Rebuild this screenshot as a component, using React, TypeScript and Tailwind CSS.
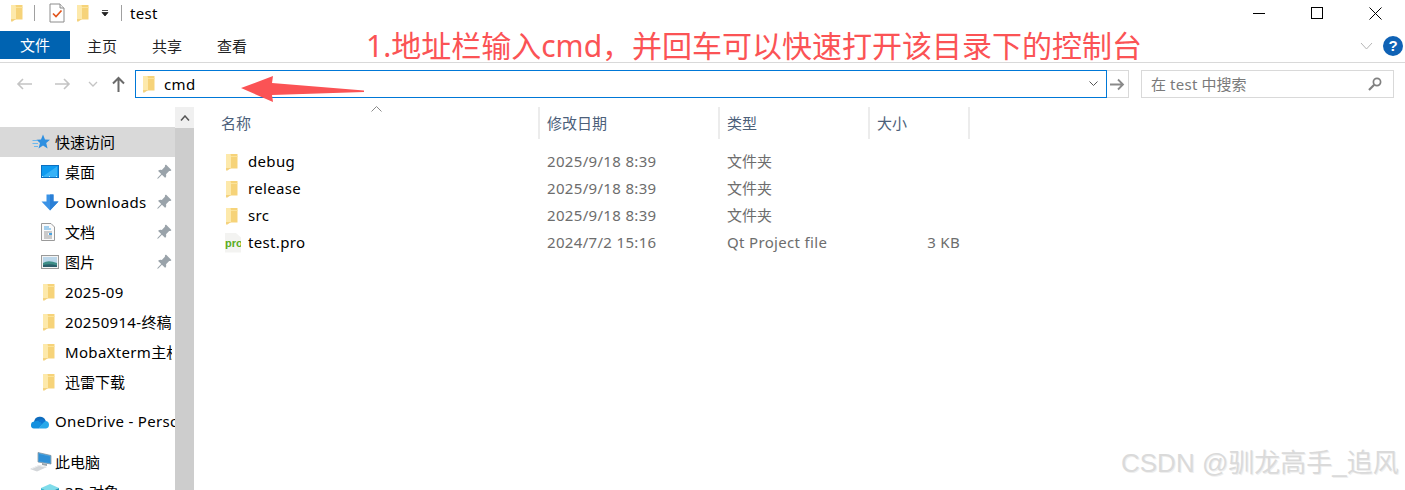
import { BsPinAngleFill } from "react-icons/bs";

const FONT = "[font-family:'Noto_Sans','Noto_Sans_CJK_SC',sans-serif]";

// latin glyphs run a little wider in the reference than the CJK ones
function L({ children }: { children: React.ReactNode }) {
  return <span className="tracking-[0.33px]">{children}</span>;
}

function Folder({ className = "" }: { className?: string }) {
  return (
    <svg className={className} width="13" height="18" viewBox="0 0 13 18">
      <path d="M1 1 H12.5 V15.5 H1 Z" fill="#f6d379" />
      <path d="M1 1 H5.5 L6 3 V15.5 H1 Z" fill="#fde9ab" />
      <path d="M1 15 H6 L2.5 17.5 H1 Z" fill="#f4d27e" />
      <path d="M6 3 H12.5 V4 H6 Z" fill="#fbe39a" />
    </svg>
  );
}

function CheckDoc() {
  return (
    <svg width="16" height="20" viewBox="0 0 16 20">
      <path d="M1 1 H11 L15 5 V19 H1 Z" fill="#fff" stroke="#8c8c8c" />
      <path d="M11 1 V5 H15" fill="#eee" stroke="#8c8c8c" />
      <path d="M4 10.5 L7 13.5 L12.5 7.5" fill="none" stroke="#e2561d" strokeWidth="1.7" />
    </svg>
  );
}

function Star() {
  return (
    <svg width="18" height="16" viewBox="0 0 18 16">
      <path d="M11 0.5 L13 5.5 L18 5.7 L14.2 9 L15.6 14.5 L11 11.5 L6.5 14.5 L8 9 L4.5 5.7 L9 5.5 Z" fill="#2e8fe0" />
      <path d="M0.5 6.5 H5 M0.5 9.5 H6 M2 12.5 H6" stroke="#6cb8ee" strokeWidth="1" />
    </svg>
  );
}

function Desktop() {
  return (
    <svg width="18" height="14" viewBox="0 0 18 14">
      <rect x="0.5" y="0.5" width="17" height="12" fill="#0f9bf0" stroke="#0c6fc0" />
      <path d="M1 12 L16 1.5 V12 Z" fill="#37b2f7" />
      <path d="M1 11.5 H17" stroke="#bfe6fb" strokeDasharray="1 6" />
    </svg>
  );
}

function DownArrow() {
  return (
    <svg width="18" height="17" viewBox="0 0 18 17">
      <path d="M5.5 0.5 H12.5 V7.5 H17.5 L9 16.5 L0.5 7.5 H5.5 Z" fill="#3b93e6" />
      <path d="M9 0.5 H12.5 V7.5 H17.5 L9 16.5 Z" fill="#2a7fd6" />
    </svg>
  );
}

function DocIcon() {
  return (
    <svg width="14" height="18" viewBox="0 0 14 18">
      <path d="M0.5 0.5 H10 L13.5 4 V17.5 H0.5 Z" fill="#fafafa" stroke="#9a9a9a" />
      <path d="M3 4 H8 M3 6 H10" stroke="#4aa3e0" />
      <path d="M3 9 H11 M3 11 H7 M3 13 H11 M3 15 H11" stroke="#9a9a9a" />
      <rect x="8" y="10" width="3" height="2" fill="#4aa3e0" />
    </svg>
  );
}

function PictureIcon() {
  return (
    <svg width="18" height="14" viewBox="0 0 18 14">
      <rect x="0.5" y="0.5" width="17" height="13" fill="#f4f4f4" stroke="#9a9a9a" />
      <rect x="2" y="2" width="14" height="10" fill="#bcd7ea" />
      <path d="M2 8 Q7 4.5 16 8 V12 H2 Z" fill="#3f8f88" />
      <path d="M2 10 Q9 8.5 16 10.5 V12 H2 Z" fill="#2c5f6b" />
    </svg>
  );
}

function OneDrive() {
  return (
    <svg width="20" height="14" viewBox="0 0 20 14">
      <path d="M4 7 A6 6 0 0 1 15.5 5.5 L16 7 H8 Z" fill="#0f6cbd" />
      <path d="M4 13.5 A3.3 3.3 0 0 1 1 10 A3.5 3.5 0 0 1 4 6.5 L8 5.5 L13 9 L9 13.5 Z" fill="#1490df" />
      <path d="M8 5.5 A6 6 0 0 1 15.5 6 L13 10 Z" fill="#0f78d4" />
      <path d="M9 13.5 L13 8 L15.5 6 A3.8 3.8 0 0 1 16 13.5 Z" fill="#28a8ea" />
    </svg>
  );
}

function Computer() {
  return (
    <svg width="22" height="20" viewBox="0 0 22 20">
      <path d="M8 0.5 L21 3.5 V12 L8 10 Z" fill="#4aa6e2" stroke="#7c8a96" strokeWidth="0.7" />
      <path d="M9 2 L20 4.5 V11 L9 9.3 Z" fill="#2f8fd6" />
      <path d="M12 11 L17 12 V14 L12 13 Z" fill="#9aa5ad" />
      <path d="M0 17 L9 13 L17 15 L7 19.5 Z" fill="#d3d6d9" />
      <path d="M2 16.5 L9 13.5 L15 15" fill="none" stroke="#eef0f2" />
    </svg>
  );
}

function Cube() {
  return (
    <svg width="18" height="16" viewBox="0 0 18 16">
      <path d="M9 0 L18 4 L9 8 L0 4 Z" fill="#7fdcea" />
      <path d="M0 4 L9 8 V16 L0 12 Z" fill="#35b6d0" />
      <path d="M18 4 L9 8 V16 L18 12 Z" fill="#1d97b8" />
    </svg>
  );
}

function ProIcon() {
  return (
    <div className="relative w-[16px] h-[20px] bg-[#f3f3f1] [clip-path:polygon(0_0,65%_0,100%_25%,100%_100%,0_100%)]">
      <span className="absolute left-0 top-[5px] text-[11px] leading-[10px] font-bold text-[#59ad1c] [font-family:'Liberation_Sans',sans-serif]">
        pro
      </span>
    </div>
  );
}

function Arrow({ d, stroke = "#c4c4c4" }: { d: string; stroke?: string }) {
  return (
    <svg width="16" height="14" viewBox="0 0 16 14">
      <path d={d} fill="none" stroke={stroke} strokeWidth="1.6" />
    </svg>
  );
}

function NavRow({
  icon,
  label,
  pinned,
}: {
  icon: React.ReactNode;
  label: React.ReactNode;
  pinned?: boolean;
}) {
  return (
    <div className="h-[30px] flex items-center shrink-0 pl-[41px] pr-[3px]">
      <div className="w-[24px] flex items-center">{icon}</div>
      <span className="flex-1 whitespace-nowrap overflow-hidden text-black">{label}</span>
      {pinned && <BsPinAngleFill className="text-[#9aa3aa] w-[16px] h-[16px]" />}
    </div>
  );
}

const FILES = [
  { name: "debug", date: "2025/9/18 8:39", type: "文件夹", size: "" },
  { name: "release", date: "2025/9/18 8:39", type: "文件夹", size: "" },
  { name: "src", date: "2025/9/18 8:39", type: "文件夹", size: "" },
  { name: "test.pro", date: "2024/7/2 15:16", type: "Qt Project file", size: "3 KB" },
];

export default function App() {
  return (
    <div className={"relative w-[1405px] h-[490px] overflow-hidden bg-white flex flex-col text-[15px] " + FONT}>
      {/* title bar */}
      <div className="h-[31px] shrink-0 flex items-center pb-[5px]">
        <div className="ml-[10px] flex"><Folder /></div>
        <div className="ml-[11px] w-px h-[16px] bg-[#a0a0a0]" />
        <div className="ml-[14px] flex"><CheckDoc /></div>
        <div className="ml-[11px] flex"><Folder /></div>
        <svg className="ml-[12px]" width="8" height="8" viewBox="0 0 8 8">
          <path d="M1 1.5 H7 M1 3.5 H7 L4 7 Z" stroke="#222" fill="#222" strokeWidth="0.8" />
        </svg>
        <div className="ml-[12px] w-px h-[16px] bg-[#a0a0a0]" />
        <span className="ml-[8px] text-black"><L>test</L></span>
        <div className="ml-auto flex items-center">
          <div className="w-[58px] h-[24px] flex items-center justify-center">
            <div className="w-[12px] h-px bg-black" />
          </div>
          <div className="w-[58px] h-[24px] flex items-center justify-center">
            <div className="w-[12px] h-[12px] border border-black" />
          </div>
          <div className="w-[59px] h-[24px] flex items-center justify-center">
            <svg width="13" height="13" viewBox="0 0 13 13">
              <path d="M0.5 0.5 L12.5 12.5 M12.5 0.5 L0.5 12.5" stroke="#000" />
            </svg>
          </div>
        </div>
      </div>

      {/* ribbon tabs */}
      <div className="h-[32px] shrink-0 flex items-start border-b border-[#d9d9d9]">
        <div className="w-[70px] h-[28px] bg-[#0063b1] text-white flex items-center justify-center">文件</div>
        <div className="flex ml-[17px] gap-[35px] h-[30px] items-center text-[#222]">
          <span>主页</span>
          <span>共享</span>
          <span>查看</span>
        </div>
        <div className="ml-auto flex items-center h-[30px] pr-[2px]">
          <svg width="13" height="8" viewBox="0 0 13 8">
            <path d="M1 1 L6.5 7 L12 1" fill="none" stroke="#b5b5b5" />
          </svg>
          <div className="ml-[10px] w-[20px] h-[20px] rounded-full bg-[#0f62b5] text-white text-[15px] font-bold flex items-center justify-center [font-family:'Liberation_Sans',sans-serif]">
            ?
          </div>
        </div>
      </div>

      {/* address row */}
      <div className="h-[44px] shrink-0 flex items-center pb-[2px]">
        <div className="w-[135px] flex items-center shrink-0 pl-[16px]">
          <Arrow d="M16 7 H2 M7 2 L2 7 L7 12" />
          <div className="ml-[23px] flex"><Arrow d="M0 7 H14 M9 2 L14 7 L9 12" /></div>
          <svg className="ml-[17px]" width="10" height="6" viewBox="0 0 10 6">
            <path d="M1 1 L5 5 L9 1" fill="none" stroke="#c4c4c4" strokeWidth="1.3" />
          </svg>
          <svg className="ml-[14px]" width="13" height="16" viewBox="0 0 13 16">
            <path d="M6.5 16 V2 M1 7.5 L6.5 2 L12 7.5" fill="none" stroke="#6a6a6a" strokeWidth="2" />
          </svg>
        </div>
        <div className="w-[972px] h-[28px] border border-[#0078d7] flex items-center pl-[6px] pr-[8px] shrink-0">
          <Folder />
          <span className="ml-[9px] text-black"><L>cmd</L></span>
          <svg className="ml-auto" width="9" height="6" viewBox="0 0 9 6">
            <path d="M0.5 0.5 L4.5 4.5 L8.5 0.5" fill="none" stroke="#555" />
          </svg>
        </div>
        <div className="w-[22px] h-[28px] border border-l-0 border-[#d9d9d9] flex items-center justify-center shrink-0">
          <svg width="15" height="13" viewBox="0 0 15 13">
            <path d="M0 6.5 H13 M8 1.5 L13 6.5 L8 11.5" fill="none" stroke="#8a8a8a" strokeWidth="1.8" />
          </svg>
        </div>
        <div className="ml-[12px] w-[253px] h-[28px] border border-[#d9d9d9] flex items-center pl-[9px] pr-[11px] text-[#7a7a7a] shrink-0">
          <span>在 <L>test</L> 中搜索</span>
          <svg className="ml-auto" width="14" height="14" viewBox="0 0 14 14">
            <circle cx="9" cy="5" r="3.6" fill="none" stroke="#808080" strokeWidth="1.7" />
            <path d="M6.2 7.8 L1 13" stroke="#808080" strokeWidth="2.2" />
          </svg>
        </div>
      </div>

      {/* body */}
      <div className="flex-1 min-h-0 flex">
        <div className="w-[175px] shrink-0 overflow-hidden pt-[20px] flex flex-col">
          <div className="h-[30px] bg-[#d9d9d9] flex items-center pl-[32px] shrink-0">
            <div className="w-[23px] flex"><Star /></div>
            <span className="text-black">快速访问</span>
          </div>
          <NavRow icon={<Desktop />} label="桌面" pinned />
          <NavRow icon={<DownArrow />} label={<L>Downloads</L>} pinned />
          <NavRow icon={<DocIcon />} label="文档" pinned />
          <NavRow icon={<PictureIcon />} label="图片" pinned />
          <NavRow icon={<Folder className="ml-[1px]" />} label={<L>2025-09</L>} />
          <NavRow icon={<Folder className="ml-[1px]" />} label={<><L>20250914-</L>终稿</>} />
          <NavRow icon={<Folder className="ml-[1px]" />} label={<><L>MobaXterm</L>主机</>} />
          <NavRow icon={<Folder className="ml-[1px]" />} label="迅雷下载" />
          <div className="h-[25px] shrink-0 mt-[12px] flex items-center pl-[30px]">
            <div className="w-[25px] flex shrink-0"><OneDrive /></div>
            <span className="whitespace-nowrap text-black"><L>OneDrive - Personal</L></span>
          </div>
          <div className="h-[30px] shrink-0 mt-[13px] flex items-center pl-[30px]">
            <div className="w-[25px] flex"><Computer /></div>
            <span className="text-black">此电脑</span>
          </div>
          <NavRow icon={<Cube />} label={<><L>3D</L> 对象</>} />
        </div>

        {/* scrollbar */}
        <div className="w-[19px] shrink-0 flex flex-col">
          <div className="h-[21px] bg-[#f0f0f0] flex items-center justify-center">
            <svg width="10" height="6" viewBox="0 0 10 6">
              <path d="M1 5.5 L5 1 L9 5.5" fill="none" stroke="#555" strokeWidth="1.5" />
            </svg>
          </div>
          <div className="flex-1 bg-[#cdcdcd]" />
        </div>

        {/* file list */}
        <div className="flex-1 min-w-0 pl-[27px]">
          <div className="h-[32px] flex text-[#4c607a] relative">
            <div className="w-[319px] border-r-2 border-[#ececec] flex items-center">名称</div>
            <div className="w-[180px] border-r-2 border-[#ececec] flex items-center pl-[7px]">修改日期</div>
            <div className="w-[150px] border-r-2 border-[#ececec] flex items-center pl-[7px]">类型</div>
            <div className="w-[100px] border-r-2 border-[#ececec] flex items-center pl-[7px]">大小</div>
            <svg className="absolute left-[150px] top-[-1px]" width="11" height="6" viewBox="0 0 11 6">
              <path d="M0.5 5.5 L5.5 0.5 L10.5 5.5" fill="none" stroke="#8a8a8a" />
            </svg>
          </div>
          <div className="pt-[9px]">
            {FILES.map((f) => (
              <div key={f.name} className="h-[27px] flex items-center text-[#6d6d6d]">
                <div className="w-[320px] flex items-center text-black shrink-0">
                  <div className="w-[27px] flex pl-[4px]">
                    {f.name === "test.pro" ? <ProIcon /> : <Folder />}
                  </div>
                  <L>{f.name}</L>
                </div>
                <div className="w-[180px] pl-[6px] shrink-0"><L>{f.date}</L></div>
                <div className="w-[150px] pl-[6px] shrink-0 whitespace-nowrap">
                  {f.size ? <L>{f.type}</L> : f.type}
                </div>
                <div className="w-[89px] text-right shrink-0"><L>{f.size}</L></div>
              </div>
            ))}
          </div>
        </div>
      </div>

      {/* screenshot annotations */}
      <div className="absolute left-[366px] top-[27px] text-[30px] leading-[38px] text-[#fb5355] whitespace-nowrap">
        1.地址栏输入cmd，并回车可以快速打开该目录下的控制台
      </div>
      <svg className="absolute left-[240px] top-[74px]" width="126" height="30" viewBox="0 0 126 30">
        <path d="M1 14 L33 2 L32 9 L124 16.5 V18 L32 21 L33 28 Z" fill="#fb5355" />
      </svg>
      <div className="absolute left-[1121px] top-[445px] text-[26px] leading-[36px] text-[#dadada] whitespace-nowrap [font-family:'Liberation_Sans','Noto_Sans_CJK_SC',sans-serif] [text-shadow:1px_1px_0_#efefef]">
        CSDN @驯龙高手_追风
      </div>
    </div>
  );
}
